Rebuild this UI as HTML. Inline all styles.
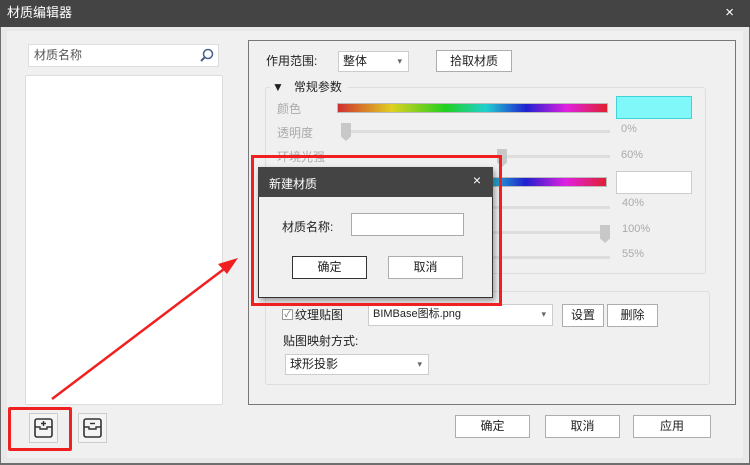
<!DOCTYPE html><html><head><meta charset="utf-8"><style>
body{margin:0;width:750px;height:465px;overflow:hidden;background:#6e6e6e;font-family:"Liberation Sans","Noto Sans CJK SC",sans-serif;font-size:12px;color:#222;position:relative}
div,span{position:absolute;box-sizing:border-box}
.btn{background:#fff;border:1px solid #adadad;text-align:center;line-height:20px}
.g{color:#aaa}
.track{height:3px;background:#ddd}
.thumb{width:10px;height:18px;background:#c8c8c8;clip-path:polygon(0 0,100% 0,100% 75%,50% 100%,0 75%)}
.grad{height:10px;border:1px solid #bbb;background:linear-gradient(to right,#d03030,#e0d020 20%,#20d020 40%,#20d0d0 55%,#2020d0 70%,#e020e0 85%,#e02030)}
.sel{background:#fff;border:1px solid #ccc;line-height:19px;padding-left:4px}
.sel:after{content:"▾";position:absolute;right:6px;top:0;font-size:9px;color:#666}
</style></head><body>
<div style="left:0;top:0;width:750px;height:27px;background:#444;color:#fff;font-size:13px;line-height:26px;padding-left:7px">材质编辑器<span style="right:16px;top:0;font-size:15px">×</span></div>
<div style="left:1px;top:27px;width:748px;height:436px;background:#e8e8e8"></div>
<div style="left:7px;top:31px;width:736px;height:427px;background:#f0f0f0"></div>
<div style="left:28px;top:44px;width:191px;height:23px;background:#fff;border:1px solid #ddd;color:#555;line-height:21px;padding-left:5px">材质名称<svg style="position:absolute;right:4px;top:3px" width="15" height="15" viewBox="0 0 15 15"><circle cx="9" cy="6" r="4.5" fill="none" stroke="#46608a" stroke-width="1.5"/><path d="M6 9L2 13" stroke="#46608a" stroke-width="2"/></svg></div>
<div style="left:25px;top:75px;width:198px;height:330px;background:#fff;border:1px solid #ddd"></div>
<div style="left:29px;top:413px;width:29px;height:30px;border:1px solid #ccc;background:#f4f4f4"><svg width="27" height="28" viewBox="0 0 27 28"><rect x="5" y="5" width="17" height="18" rx="2" fill="none" stroke="#333" stroke-width="1.6"/><path d="M5 13h5v2h7v-2h5" fill="none" stroke="#333" stroke-width="1.4"/><path d="M13.5 7v5M11 9.5h5" stroke="#333" stroke-width="1.4"/></svg></div>
<div style="left:78px;top:413px;width:29px;height:30px;border:1px solid #ccc;background:#f4f4f4"><svg width="27" height="28" viewBox="0 0 27 28"><rect x="5" y="5" width="17" height="18" rx="2" fill="none" stroke="#333" stroke-width="1.6"/><path d="M5 13h5v2h7v-2h5" fill="none" stroke="#333" stroke-width="1.4"/><path d="M11 9.5h5" stroke="#333" stroke-width="1.4"/></svg></div>
<div style="left:8px;top:407px;width:64px;height:44px;border:3px solid #f02020;border-radius:2px"></div>
<div style="left:248px;top:40px;width:488px;height:365px;border:1px solid #777"></div>
<span style="left:266px;top:52px">作用范围:</span>
<div class="sel" style="left:338px;top:51px;width:71px;height:21px">整体</div>
<div class="btn" style="left:436px;top:50px;width:76px;height:22px">拾取材质</div>
<div style="left:265px;top:87px;width:441px;height:187px;border:1px solid #ddd;border-radius:3px"></div>
<span style="left:270px;top:78px;background:#f0f0f0;padding:0 6px 0 2px">▼&nbsp;&nbsp; 常规参数</span>
<span class="g" style="left:277px;top:100px">颜色</span><div class="grad" style="left:337px;top:103px;width:271px"></div>
<div style="left:616px;top:96px;width:76px;height:23px;background:#80f8fa;border:1px solid #40d4d8"></div>
<span class="g" style="left:277px;top:124px">透明度</span><div class="track" style="left:345px;top:130px;width:265px"></div><div class="thumb" style="left:341px;top:123px"></div><span class="g" style="left:621px;top:123px;font-size:11px">0%</span>
<span class="g" style="left:277px;top:148px">环境光强</span><div class="track" style="left:345px;top:155px;width:265px"></div><div class="thumb" style="left:497px;top:149px"></div><span class="g" style="left:621px;top:149px;font-size:11px">60%</span>
<div class="grad" style="left:337px;top:177px;width:270px"></div><div style="left:616px;top:171px;width:76px;height:23px;background:#fff;border:1px solid #ccc"></div>
<div class="track" style="left:345px;top:206px;width:265px"></div><span class="g" style="left:622px;top:197px;font-size:11px">40%</span>
<div class="track" style="left:345px;top:231px;width:265px"></div><div class="thumb" style="left:600px;top:225px"></div><span class="g" style="left:622px;top:223px;font-size:11px">100%</span>
<div class="track" style="left:345px;top:256px;width:265px"></div><span class="g" style="left:622px;top:248px;font-size:11px">55%</span>
<div style="left:265px;top:291px;width:445px;height:94px;border:1px solid #ddd;border-radius:3px"></div>
<div style="left:282px;top:309px;width:11px;height:11px;border:1px solid #999;background:#fff;font-size:9px;line-height:9px;text-align:center;color:#666">✓</div>
<span style="left:295px;top:306px">纹理贴图</span>
<div class="sel" style="left:368px;top:304px;width:185px;height:22px;font-size:11px">BIMBase图标.png</div>
<div class="btn" style="left:562px;top:304px;width:42px;height:23px">设置</div>
<div class="btn" style="left:607px;top:304px;width:51px;height:23px">删除</div>
<span style="left:283px;top:332px">贴图映射方式:</span>
<div class="sel" style="left:285px;top:354px;width:144px;height:21px">球形投影</div>
<div class="btn" style="left:455px;top:415px;width:75px;height:23px">确定</div>
<div class="btn" style="left:545px;top:415px;width:75px;height:23px">取消</div>
<div class="btn" style="left:633px;top:415px;width:78px;height:23px">应用</div>
<div style="left:258px;top:167px;width:235px;height:131px;background:#f0f0f0;border:1px solid #333;box-shadow:2px 3px 6px rgba(0,0,0,.35)"></div>
<div style="left:258px;top:167px;width:235px;height:30px;background:#444;color:#fff;font-size:12px;line-height:34px;padding-left:11px">新建材质<span style="right:12px;top:-4px;font-size:14px">×</span></div>
<span style="left:282px;top:218px">材质名称:</span>
<div style="left:351px;top:213px;width:113px;height:23px;background:#fff;border:1px solid #aaa"></div>
<div class="btn" style="left:292px;top:256px;width:75px;height:23px;border-color:#333">确定</div>
<div class="btn" style="left:388px;top:256px;width:75px;height:23px">取消</div>
<div style="left:251px;top:155px;width:251px;height:151px;border:3px solid #f02020"></div>
<svg style="position:absolute;left:0;top:0" width="750" height="465"><path d="M52 399L228 266" stroke="#f02020" stroke-width="2.5"/><path d="M238 258L218 264L227 274Z" fill="#f02020"/></svg>
</body></html>
